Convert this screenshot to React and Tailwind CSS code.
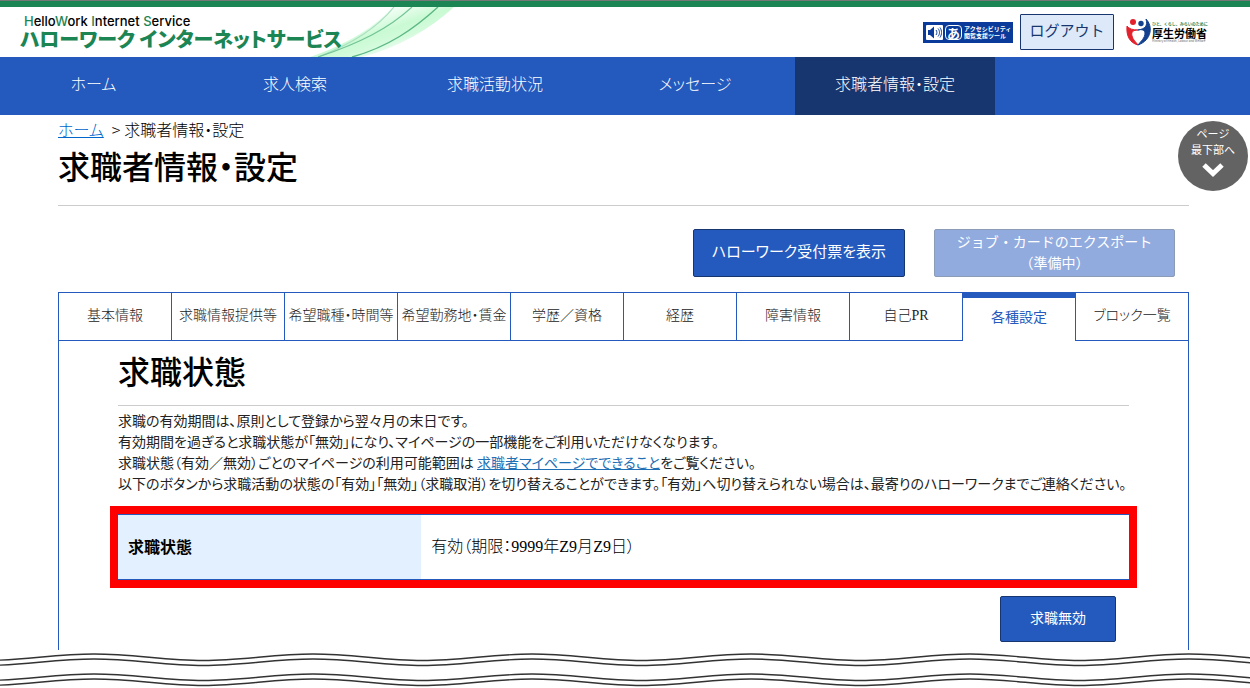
const NAV = [
  { label: 'ホーム', cls: 'w-[195px] pr-2' },
  { label: '求人検索', cls: 'w-[200px]' },
  { label: '求職活動状況', cls: 'w-[200px]' },
  { label: 'メッセージ', cls: 'w-[200px]' },
  { label: '求職者情報・設定', cls: 'w-[200px] bg-[#173670]', current: true },
]

const TABS = [
  '基本情報',
  '求職情報提供等',
  '希望職種・時間等',
  '希望勤務地・賃金',
  '学歴／資格',
  '経歴',
  '障害情報',
  '自己PR',
  '各種設定',
  'ブロック一覧',
]
const ACTIVE_TAB = '各種設定'

function Swoosh() {
  return (
    <svg className="absolute left-[310px] top-0 h-[50px] w-[150px]" viewBox="0 0 150 50" aria-hidden="true">
      <defs>
        <linearGradient id="leaf" x1="0" y1="0" x2="1" y2="1">
          <stop offset="0.25" stopColor="#ffffff" />
          <stop offset="0.5" stopColor="#c9fad3" />
          <stop offset="0.62" stopColor="#d3fbdc" />
          <stop offset="0.78" stopColor="#ffffff" />
        </linearGradient>
      </defs>
      <path d="M0 50C35 38 66 20 82 0H144C120 22 90 40 52 50Z" fill="url(#leaf)" />
      <path d="M8 50C42 37 68 20 84 0" fill="none" stroke="#a9dfbf" strokeWidth="1.2" />
      <path d="M8 50C50 36 78 22 102 0" fill="none" stroke="#73c496" strokeWidth="1.2" />
      <path d="M42 50C78 40 104 22 128 0" fill="none" stroke="#5db886" strokeWidth="1.4" />
    </svg>
  )
}

function AccessibilityTool() {
  return (
    <a href="#accessibility" className="flex h-[21px] w-[90px] items-center gap-[2px] bg-[#0a3b9a] pl-[3px] text-white">
      <svg className="h-[15px] w-[17px] shrink-0" viewBox="0 0 17 15" aria-hidden="true">
        <rect width="17" height="15" rx="1" fill="#fff" />
        <path d="M2 5h2l4-3.500v12l-4-3.500h-2z" fill="#0a3b9a" />
        <path d="M10 5c1.200 1.500 1.200 3.500 0 5M12 3.500c2 2.500 2 5.500 0 8M14 2.500c2 3 2 7 0 10" fill="none" stroke="#0a3b9a" />
      </svg>
      <span className="flex h-[15px] w-[17px] shrink-0 items-center justify-center rounded-sm border border-white text-[13px] font-bold leading-none">
        あ
      </span>
      <span className="whitespace-nowrap text-[6px] font-bold leading-[7px]">
        アクセシビリティ
        <br />
        閲覧支援ツール
      </span>
    </a>
  )
}

function MinistryLogo() {
  return (
    <a href="#mhlw" className="flex w-[80px] items-center gap-[1px] text-black">
      <svg className="h-[28px] w-[25px] shrink-0" viewBox="0 0 25 28" aria-hidden="true">
        <circle cx="7" cy="4" r="3" fill="#e2212d" />
        <circle cx="15" cy="5.500" r="2.700" fill="#14418f" />
        <path d="M1 8C0 18 4 25 12 27C10 24 7 22 6 18C5 14 7 12 12 12C7 12 3 11 1 8Z" fill="#e2212d" stroke="#e2212d" />
        <path d="M20 1C27 8 26 22 12 27C15 23 19 20 19 15C19 12 16 11 12 12C19 11 22 8 20 1Z" fill="#14418f" stroke="#14418f" />
      </svg>
      <span className="flex flex-col whitespace-nowrap">
        <span className="text-[4px] font-bold leading-[6px] text-[#1c8554]">ひと、くらし、みらいのために</span>
        <span className="text-[11px] font-bold leading-[12px]">厚生労働省</span>
        <span className="text-[3px] leading-[5px] text-[#666]">Ministry of Health, Labour and Welfare</span>
      </span>
    </a>
  )
}

function Header() {
  return (
    <header className="relative flex h-[57px] justify-between border-t border-[#777]">
      <div className="absolute inset-x-0 top-0 h-[6px] bg-[#1c8554]" />
      <div className="relative mt-[6px] pl-5 pt-[7px]">
        <Swoosh />
        <p className="relative pl-1 font-[Inter,sans-serif] text-[13px] font-medium leading-[14px] text-black">
          <span className="text-[#1c8554]">H</span>ello<span className="text-[#1c8554]">W</span>ork{' '}
          <span className="text-[#1c8554]">I</span>nternet <span className="text-[#1c8554]">S</span>ervice
        </p>
        <p className="relative whitespace-nowrap text-[20px] font-black leading-[22px] text-[#1c8554] [font-feature-settings:'palt']">
          ハローワーク インターネットサービス
        </p>
      </div>
      <div className="mr-[44px] mt-[6px] flex items-center">
        <AccessibilityTool />
        <button type="button" className="ml-[7px] mr-3 h-[36px] w-[94px] rounded-[1px] border border-[#173670] bg-[#dde9f8] pb-1 text-[15px] text-[#173670]">
          ログアウト
        </button>
        <MinistryLogo />
      </div>
    </header>
  )
}

function Waves() {
  const wave = 'c40 0 70 6.500 109.500 6.500s70-6.500 109.500-6.500'
  const d = `M-125 1${wave}${wave}${wave}${wave}${wave}${wave}${wave}`
  return (
    <svg className="block h-[38px] w-full" viewBox="0 0 1250 38" preserveAspectRatio="none" aria-hidden="true">
      {[3, 8, 23, 28].map((y) => (
        <path key={y} d={d} transform={`translate(0 ${y})`} fill="none" stroke="#333" strokeWidth="1.400" />
      ))}
    </svg>
  )
}

function Digits({ children }) {
  return <span className="font-['Liberation_Serif',serif] font-normal">{children}</span>
}

export default function App() {
  return (
    <div className="relative overflow-hidden bg-white font-['Noto_Sans_CJK_JP',sans-serif] text-black">
      <Header />
      <nav className="flex h-[58px] bg-[#2459bd]">
        {NAV.map((item) => (
          <a
            key={item.label}
            href="#nav"
            aria-current={item.current ? 'page' : undefined}
            className={`flex items-center justify-center pb-[6px] text-[16px] font-light text-white [font-feature-settings:'palt'] ${item.cls}`}
          >
            {item.label}
          </a>
        ))}
      </nav>

      <a href="#bottom" className="absolute right-[2px] top-[121px] flex h-[70px] w-[70px] flex-col items-center rounded-full bg-[#636363] pt-1 text-[11px] leading-[16px] text-white">
        <span>ページ</span>
        <span>最下部へ</span>
        <svg className="mt-[6px] h-[14px] w-[22px]" viewBox="0 0 22 14" aria-hidden="true">
          <path d="M2 2l9 8.500L20 2" fill="none" stroke="#fff" strokeWidth="5" />
        </svg>
      </a>

      <main className="ml-[58px] mr-[61px]">
        <p className="pt-[2px] text-[16px] font-light leading-[24px] [font-feature-settings:'palt']">
          <a href="#home" className="text-[#0066cc] underline">ホーム</a>
          <span className="ml-2 mr-1">&gt;</span>求職者情報・設定
        </p>
        <h1 className="border-b border-[#ccc] pb-[16px] text-[32px] font-medium leading-[48px] [font-feature-settings:'palt']">
          求職者情報・設定
        </h1>

        <div className="mt-[23px] flex justify-end gap-[29px] pr-[14px]">
          <button type="button" className="h-[48px] w-[212px] rounded-[2px] border border-[#173670] bg-[#2459bd] pb-1 text-[15px] text-white [font-feature-settings:'palt']">
            ハローワーク受付票を表示
          </button>
          <button type="button" disabled className="h-[48px] w-[241px] rounded-[2px] border border-[#8b9bb8] bg-[#92abde] pb-[3px] text-[14px] leading-[21px] text-white">
            ジョブ・カードのエクスポート
            <br />
            （準備中）
          </button>
        </div>

        <div role="tablist" className="mt-[15px] grid grid-cols-10 border-r border-[#2459bd]">
          {TABS.map((tab) => {
            const active = tab === ACTIVE_TAB
            return (
              <button
                key={tab}
                type="button"
                role="tab"
                aria-selected={active}
                className={
                  active
                    ? 'h-[49px] whitespace-nowrap border-l border-t-[6px] border-[#2459bd] pb-[6px] text-[14px] text-[#2459bd]'
                    : "h-[49px] whitespace-nowrap border-y border-l border-[#2459bd] pb-1 text-[14px] font-light text-[#222] [font-feature-settings:'palt']"
                }
              >
                {tab === '自己PR' ? <>自己<Digits>PR</Digits></> : tab}
              </button>
            )
          })}
        </div>

        <section className="h-[309px] border-x border-[#2459bd] px-[51px]">
          <h2 className="mx-2 border-b border-[#ccc] pb-[11px] pt-[5px] text-[32px] font-medium leading-[48px]">
            求職状態
          </h2>
          <p className="ml-2 mt-1 whitespace-nowrap text-[14px] leading-[21px] text-[#222] [font-feature-settings:'palt']">
            求職の有効期間は、原則として登録から翌々月の末日です。
            <br />
            有効期間を過ぎると求職状態が「無効」になり、マイページの一部機能をご利用いただけなくなります。
            <br />
            求職状態（有効／無効）ごとのマイページの利用可能範囲は <a href="#guide" className="text-[#1f6fb5] underline">求職者マイページでできること</a>をご覧ください。
            <br />
            以下のボタンから求職活動の状態の「有効」「無効」（求職取消）を切り替えることができます。「有効」へ切り替えられない場合は、最寄りのハローワークまでご連絡ください。
          </p>
          <div className="mt-[12px] border-8 border-[#f00]">
            <table className="h-[66px] w-full border-y border-[#2459bd]">
              <tbody>
                <tr>
                  <th scope="row" className="w-[30%] bg-[#e3f0ff] pb-[2px] pl-[10px] text-left text-[16px] font-bold">求職状態</th>
                  <td className="pb-[2px] pl-[10px] text-[16px] font-light [font-feature-settings:'palt']">
                    有効（期限：<Digits>9999</Digits>年<Digits>Z9</Digits>月<Digits>Z9</Digits>日）
                  </td>
                </tr>
              </tbody>
            </table>
          </div>
          <div className="mt-2 flex justify-end pr-[21px]">
            <button type="button" className="h-[46px] w-[116px] rounded-[2px] border border-[#173670] bg-[#2459bd] pb-1 text-[14px] text-white">
              求職無効
            </button>
          </div>
        </section>
      </main>
      <Waves />
    </div>
  )
}
